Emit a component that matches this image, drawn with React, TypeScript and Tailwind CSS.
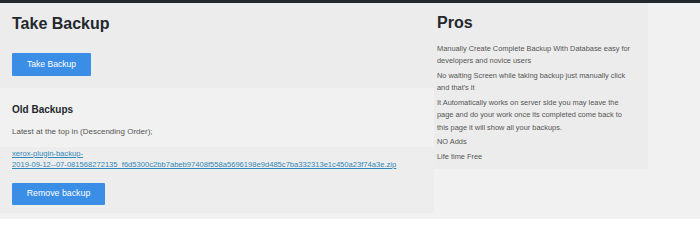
import React from "react";

const pros = [
  ["Manually Create Complete Backup With Database easy for", "developers and novice users"],
  ["No waiting Screen while taking backup just manually click", "and that's it"],
  [
    "It Automatically works on server side you may leave the",
    "page and do your work once its completed come back to",
    "this page it will show all your backups.",
  ],
  ["NO Adds"],
  ["Life time Free"],
];

const fileName =
  "2019-09-12--07-081568272135_f6d5300c2bb7abeb97408f558a5696198e9d485c7ba332313e1c450a23f74a3e.zip";

const App = () => {
  return (
    <div className="w-[700px] h-[219px] overflow-hidden bg-[#f1f1f1] font-['Liberation_Sans',Arial,sans-serif]">
      <div className="h-[3px] bg-[#23282d]" />
      <div className="flex">
        <div className="w-[434px]">
          <section className="h-[85px] bg-[#ececec] pl-[12px] pt-[11px]">
            <h1 className="text-[16px] leading-[20px] font-bold text-[#23282d]">Take Backup</h1>
            <button className="mt-[19px] h-[23px] w-[79px] bg-[#3a8ee6] text-white text-[8.6px] rounded-[1px]">
              Take Backup
            </button>
          </section>
          <section className="h-[59px] pl-[12px] pt-[15px]">
            <h2 className="text-[10px] leading-[14px] font-bold text-[#23282d]">Old Backups</h2>
            <p className="mt-[9px] text-[8px] leading-[11px] text-[#555]">
              Latest at the top in (Descending Order);
            </p>
          </section>
          <section className="h-[66px] bg-[#ededed] pl-[12px] pt-[0.5px]">
            <a href="#" className="block text-[7.6px] leading-[11px] text-[#2f86b8] underline whitespace-nowrap">
              xerox-plugin-backup-
              <br />
              {fileName}
            </a>
            <button className="mt-[13px] h-[22px] w-[93px] bg-[#3a8ee6] text-white text-[8.8px] rounded-[1px]">
              Remove backup
            </button>
          </section>
        </div>
        <aside className="w-[214px] h-[166px] bg-[#ececec] px-[3px] pt-[10px]">
          <h2 className="text-[16px] leading-[20px] font-bold text-[#23282d]">Pros</h2>
          <div className="mt-[10px]">
            {pros.map((lines) => (
              <p
                key={lines[0]}
                className="mb-[2.4px] text-[7.4px] leading-[12.3px] text-[#555] whitespace-nowrap"
              >
                {lines.map((line, i) => (
                  <React.Fragment key={line}>
                    {i > 0 && <br />}
                    {line}
                  </React.Fragment>
                ))}
              </p>
            ))}
          </div>
        </aside>
      </div>
    </div>
  );
};

export default App;
